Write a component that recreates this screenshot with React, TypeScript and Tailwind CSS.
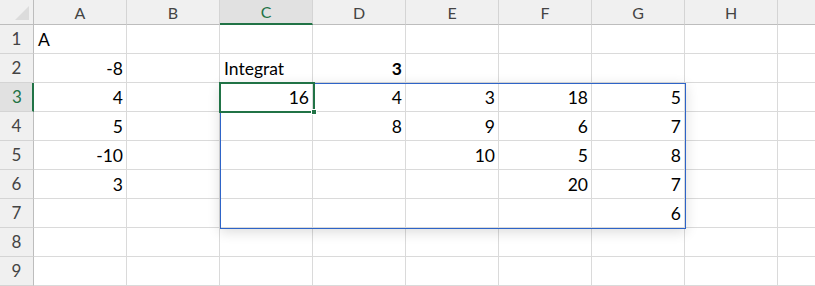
import React from "react";

const COLS = ["A", "B", "C", "D", "E", "F", "G", "H", "I"];

type Cell = { v: string; left?: boolean; bold?: boolean };

// row number -> column letter -> cell
const DATA: Record<number, Record<string, Cell>> = {
  1: { A: { v: "A", left: true } },
  2: { A: { v: "-8" }, C: { v: "Integrat", left: true }, D: { v: "3", bold: true } },
  3: { A: { v: "4" }, C: { v: "16" }, D: { v: "4" }, E: { v: "3" }, F: { v: "18" }, G: { v: "5" } },
  4: { A: { v: "5" }, D: { v: "8" }, E: { v: "9" }, F: { v: "6" }, G: { v: "7" } },
  5: { A: { v: "-10" }, E: { v: "10" }, F: { v: "5" }, G: { v: "8" } },
  6: { A: { v: "3" }, F: { v: "20" }, G: { v: "7" } },
  7: { G: { v: "6" } },
};

const ROWS = [1, 2, 3, 4, 5, 6, 7, 8, 9];

const grid = "grid grid-cols-[34px_repeat(8,93px)_93px]";

export default function App() {
  return (
    <div
      className="relative h-[286px] w-[815px] overflow-hidden bg-white text-black"
      style={{ fontFamily: "Lato, 'Noto Sans', sans-serif" }}
    >
      {/* column headers */}
      <div className={grid}>
        <div className="relative h-[25px] border-r border-b border-[#bdbdbd] bg-[#f0f0f0]">
          <svg className="absolute right-[4px] bottom-[4px]" width="14" height="14" viewBox="0 0 14 14">
            <polygon points="14,0 14,14 0,14" fill="#dcdcdc" />
          </svg>
        </div>
        {COLS.map((c) => (
          <div
            key={c}
            className={
              c === "C"
                ? "flex h-[25px] items-center justify-center border-r border-b-2 border-r-[#d4d4d4] border-b-[#217346] bg-[#e1e1e1] pt-[1px] text-[16px] text-[#217346]"
                : "flex h-[25px] items-center justify-center border-r border-b border-r-[#d4d4d4] border-b-[#bdbdbd] bg-[#f0f0f0] pt-[1px] text-[16px] text-[#444]"
            }
          >
            {c === "I" ? "" : c}
          </div>
        ))}
      </div>

      {/* rows */}
      {ROWS.map((r) => (
        <div key={r} className={grid}>
          <div
            className={
              r === 3
                ? "flex h-[29px] items-center justify-center border-r-2 border-b border-r-[#217346] border-b-[#d4d4d4] bg-[#e1e1e1] pl-[2px] text-[17px] text-[#217346]"
                : "flex h-[29px] items-center justify-center border-r border-b border-r-[#bdbdbd] border-b-[#d4d4d4] bg-[#f0f0f0] text-[17px] text-[#444]"
            }
          >
            {r}
          </div>
          {COLS.map((c) => {
            const cell = DATA[r]?.[c];
            return (
              <div
                key={c}
                className={`flex h-[29px] items-end border-r border-b border-[#dadada] pb-[3px] text-[17.5px] leading-[20px] ${
                  cell?.left ? "justify-start pl-[4px]" : "justify-end pr-[3px]"
                } ${cell?.bold ? "font-bold" : ""}`}
              >
                {cell?.v}
              </div>
            );
          })}
        </div>
      ))}

      {/* range outline C3:G7 */}
      <div className="pointer-events-none absolute top-[83px] left-[220px] h-[146px] w-[466px] border border-[#2e64c8] shadow-[0_3px_12px_rgba(0,0,0,0.14)]" />

      {/* active cell C3 */}
      <div className="pointer-events-none absolute top-[82px] left-[219px] h-[31px] w-[96px] border-2 border-[#217346]">
        <div className="absolute right-[-4px] bottom-[-4px] h-[6px] w-[6px] border border-white bg-[#217346]" />
      </div>
    </div>
  );
}
